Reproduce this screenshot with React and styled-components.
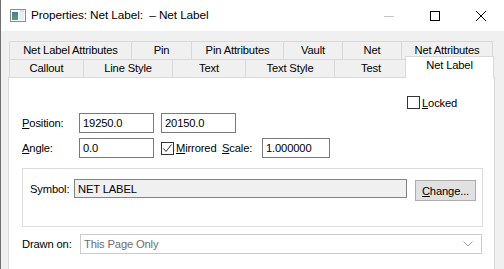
import React from "react";
import styled, { createGlobalStyle } from "styled-components";

const GlobalStyle = createGlobalStyle`
  html, body {
    margin: 0;
    padding: 0;
    background: #f0f0f0;
  }
  body {
    font-family: "Liberation Sans", Arial, sans-serif;
    font-size: 11.2px;
    letter-spacing: -0.15px;
    color: #000;
  }
`;

const Window = styled.div`
  width: 504px;
  height: 269px;
  overflow: hidden;
  display: flex;
  flex-direction: column;
  border-left: 1px solid #6f6f6f;
  box-sizing: border-box;
  background: #f0f0f0;
`;

const TitleBar = styled.div`
  height: 31px;
  flex: none;
  background: #fff;
  display: flex;
  align-items: center;
  padding-left: 9px;
`;

const TitleText = styled.div`
  margin-left: 5px;
  font-size: 11.8px;
  letter-spacing: -0.1px;
  margin-top: -1px;
`;

const Controls = styled.div`
  margin-left: auto;
  display: flex;
  align-items: center;
  height: 100%;
`;

const ControlButton = styled.div`
  width: 46px;
  height: 100%;
  display: flex;
  align-items: center;
  justify-content: center;
`;

const Body = styled.div`
  flex: 1;
  padding: 10px 9px 0 7px;
  display: flex;
  flex-direction: column;
  min-height: 0;
`;

const TabRow = styled.div`
  display: flex;
  height: 18px;
  padding-left: 1px;
  position: relative;
`;

const Tab = styled.div`
  box-sizing: border-box;
  width: ${(p) => p.$w}px;
  height: 18px;
  border: 1px solid #d9d9d9;
  border-bottom: none;
  border-right: ${(p) => (p.$last ? "1px solid #d9d9d9" : "none")};
  background: #f0f0f0;
  display: flex;
  align-items: center;
  justify-content: center;
  padding-bottom: 1px;
  white-space: nowrap;
`;

const ActiveTab = styled(Tab)`
  width: ${(p) => p.$w + 4}px;
  height: 22px;
  margin: -3px -2px 0 -2px;
  border-right: 1px solid #d9d9d9;
  background: #fff;
  position: relative;
  z-index: 2;
  align-items: flex-start;
  padding-top: 2px;
`;

const Page = styled.div`
  flex: 1;
  background: #fff;
  border: 1px solid #d9d9d9;
  border-bottom: none;
  padding: 18px 0 0 13px;
  display: flex;
  flex-direction: column;
`;

const LockedRow = styled.div`
  display: flex;
  align-items: center;
  padding-left: 385px;
  height: 13px;
`;

const FieldRow = styled.div`
  display: flex;
  align-items: center;
  margin-top: ${(p) => p.$mt}px;
  height: ${(p) => p.$h || 20}px;
`;

const Label = styled.div`
  width: ${(p) => p.$w}px;
  flex: none;
`;

const Input = styled.div`
  box-sizing: border-box;
  width: ${(p) => p.$w}px;
  height: ${(p) => p.$h || 20}px;
  border: 1px solid #7a7a7a;
  background: #fff;
  padding-left: 3px;
  display: flex;
  align-items: center;
  margin-right: ${(p) => p.$mr || 0}px;
  flex: none;
`;

const CheckGroup = styled.div`
  display: flex;
  align-items: center;
  width: ${(p) => p.$w}px;
  flex: none;
`;

const Box = styled.div`
  box-sizing: border-box;
  width: 13px;
  height: 13px;
  border: 1px solid #333;
  background: #fff;
  flex: none;
  display: flex;
  align-items: center;
  justify-content: center;
`;

const CheckLabel = styled.div`
  margin-left: 2px;
  white-space: nowrap;
`;

const GroupBox = styled.fieldset`
  box-sizing: border-box;
  margin: 10px 0 0 0;
  width: 461px;
  height: 59px;
  border: 1px solid #dcdcdc;
  padding: 10px 0 0 7px;
  display: flex;
  align-items: flex-start;
`;

const SymbolLabel = styled.div`
  width: 44px;
  flex: none;
  height: 19px;
  display: flex;
  align-items: center;
`;

const SymbolField = styled(Input)`
  background: #f0f0f0;
  border-color: #838383;
  height: 19px;
`;

const Button = styled.div`
  box-sizing: border-box;
  width: 61px;
  height: 21px;
  margin-left: 8px;
  margin-top: 1px;
  border: 1px solid #adadad;
  background: #e1e1e1;
  display: flex;
  align-items: center;
  justify-content: center;
`;

const Combo = styled.div`
  box-sizing: border-box;
  width: 402px;
  height: 20px;
  border: 1px solid #cccccc;
  background: #fff;
  color: #6d6d6d;
  display: flex;
  align-items: center;
  padding: 0 8px 0 3px;
  justify-content: space-between;
`;

const U = styled.span`
  text-decoration: underline;
  text-underline-offset: 1px;
`;

const row1 = [
  ["Net Label Attributes", 122],
  ["Pin", 60],
  ["Pin Attributes", 92],
  ["Vault", 59],
  ["Net", 59],
  ["Net Attributes", 92],
];

const row2 = [
  ["Callout", 74],
  ["Line Style", 89],
  ["Text", 73],
  ["Text Style", 89],
  ["Test", 73],
];

function AppIcon() {
  return (
    <svg width="16" height="13" viewBox="0 0 16 13">
      <defs>
        <linearGradient id="ig" x1="0" y1="0" x2="0" y2="1">
          <stop offset="0" stopColor="#3f7f9f" />
          <stop offset="1" stopColor="#5aa070" />
        </linearGradient>
      </defs>
      <rect x="0.5" y="0.5" width="15" height="12" fill="#fff" stroke="#8c8c8c" />
      <rect x="2" y="3" width="6" height="8" fill="url(#ig)" />
      <rect x="9" y="3" width="5" height="8" fill="#e6eef2" />
      <rect x="10" y="1.5" width="4" height="1" fill="#b0c8d8" />
    </svg>
  );
}

function App() {
  return (
    <>
      <GlobalStyle />
      <Window>
        <TitleBar>
          <AppIcon />
          <TitleText>Properties: Net Label:&nbsp; – Net Label</TitleText>
          <Controls>
            <ControlButton>
              <svg width="10" height="10" viewBox="0 0 10 10">
                <line x1="0" y1="5.5" x2="10" y2="5.5" stroke="#c4c4c4" strokeWidth="1" />
              </svg>
            </ControlButton>
            <ControlButton>
              <svg width="10" height="10" viewBox="0 0 10 10">
                <rect x="0.5" y="0.5" width="9" height="9" fill="none" stroke="#000" strokeWidth="1" />
              </svg>
            </ControlButton>
            <ControlButton>
              <svg width="10" height="10" viewBox="0 0 10 10">
                <path d="M0 0 L10 10 M10 0 L0 10" stroke="#000" strokeWidth="1" />
              </svg>
            </ControlButton>
          </Controls>
        </TitleBar>
        <Body>
          <TabRow>
            {row1.map(([t, w], i) => (
              <Tab key={t} $w={w} $last={i === row1.length - 1}>
                {t}
              </Tab>
            ))}
          </TabRow>
          <TabRow>
            {row2.map(([t, w]) => (
              <Tab key={t} $w={w}>
                {t}
              </Tab>
            ))}
            <ActiveTab $w={85}>Net Label</ActiveTab>
          </TabRow>
          <Page>
            <LockedRow>
              <Box />
              <CheckLabel>
                <U>L</U>ocked
              </CheckLabel>
            </LockedRow>
            <FieldRow $mt={4}>
              <Label $w={57}>
                <U>P</U>osition:
              </Label>
              <Input $w={75} $mr={7}>19250.0</Input>
              <Input $w={75}>20150.0</Input>
            </FieldRow>
            <FieldRow $mt={5}>
              <Label $w={57}>
                <U>A</U>ngle:
              </Label>
              <Input $w={75} $mr={7}>0.0</Input>
              <CheckGroup $w={61}>
                <Box>
                  <svg width="11" height="11" viewBox="0 0 11 11">
                    <path d="M1.5 5.5 L4 8.5 L9.5 1.5" fill="none" stroke="#333" strokeWidth="1" />
                  </svg>
                </Box>
                <CheckLabel>
                  <U>M</U>irrored
                </CheckLabel>
              </CheckGroup>
              <Label $w={40}>
                <U>S</U>cale:
              </Label>
              <Input $w={68}>1.000000</Input>
            </FieldRow>
            <GroupBox>
              <SymbolLabel>Symbol:</SymbolLabel>
              <SymbolField $w={333}>NET LABEL</SymbolField>
              <Button>
                <span>
                  <U>C</U>hange...
                </span>
              </Button>
            </GroupBox>
            <FieldRow $mt={7}>
              <Label $w={58}>Drawn on:</Label>
              <Combo>
                <span>This Page Only</span>
                <svg width="10" height="6" viewBox="0 0 10 6">
                  <path d="M0.5 0.5 L5 5 L9.5 0.5" fill="none" stroke="#a0a0a0" strokeWidth="1" />
                </svg>
              </Combo>
            </FieldRow>
          </Page>
        </Body>
      </Window>
    </>
  );
}

export default App;
